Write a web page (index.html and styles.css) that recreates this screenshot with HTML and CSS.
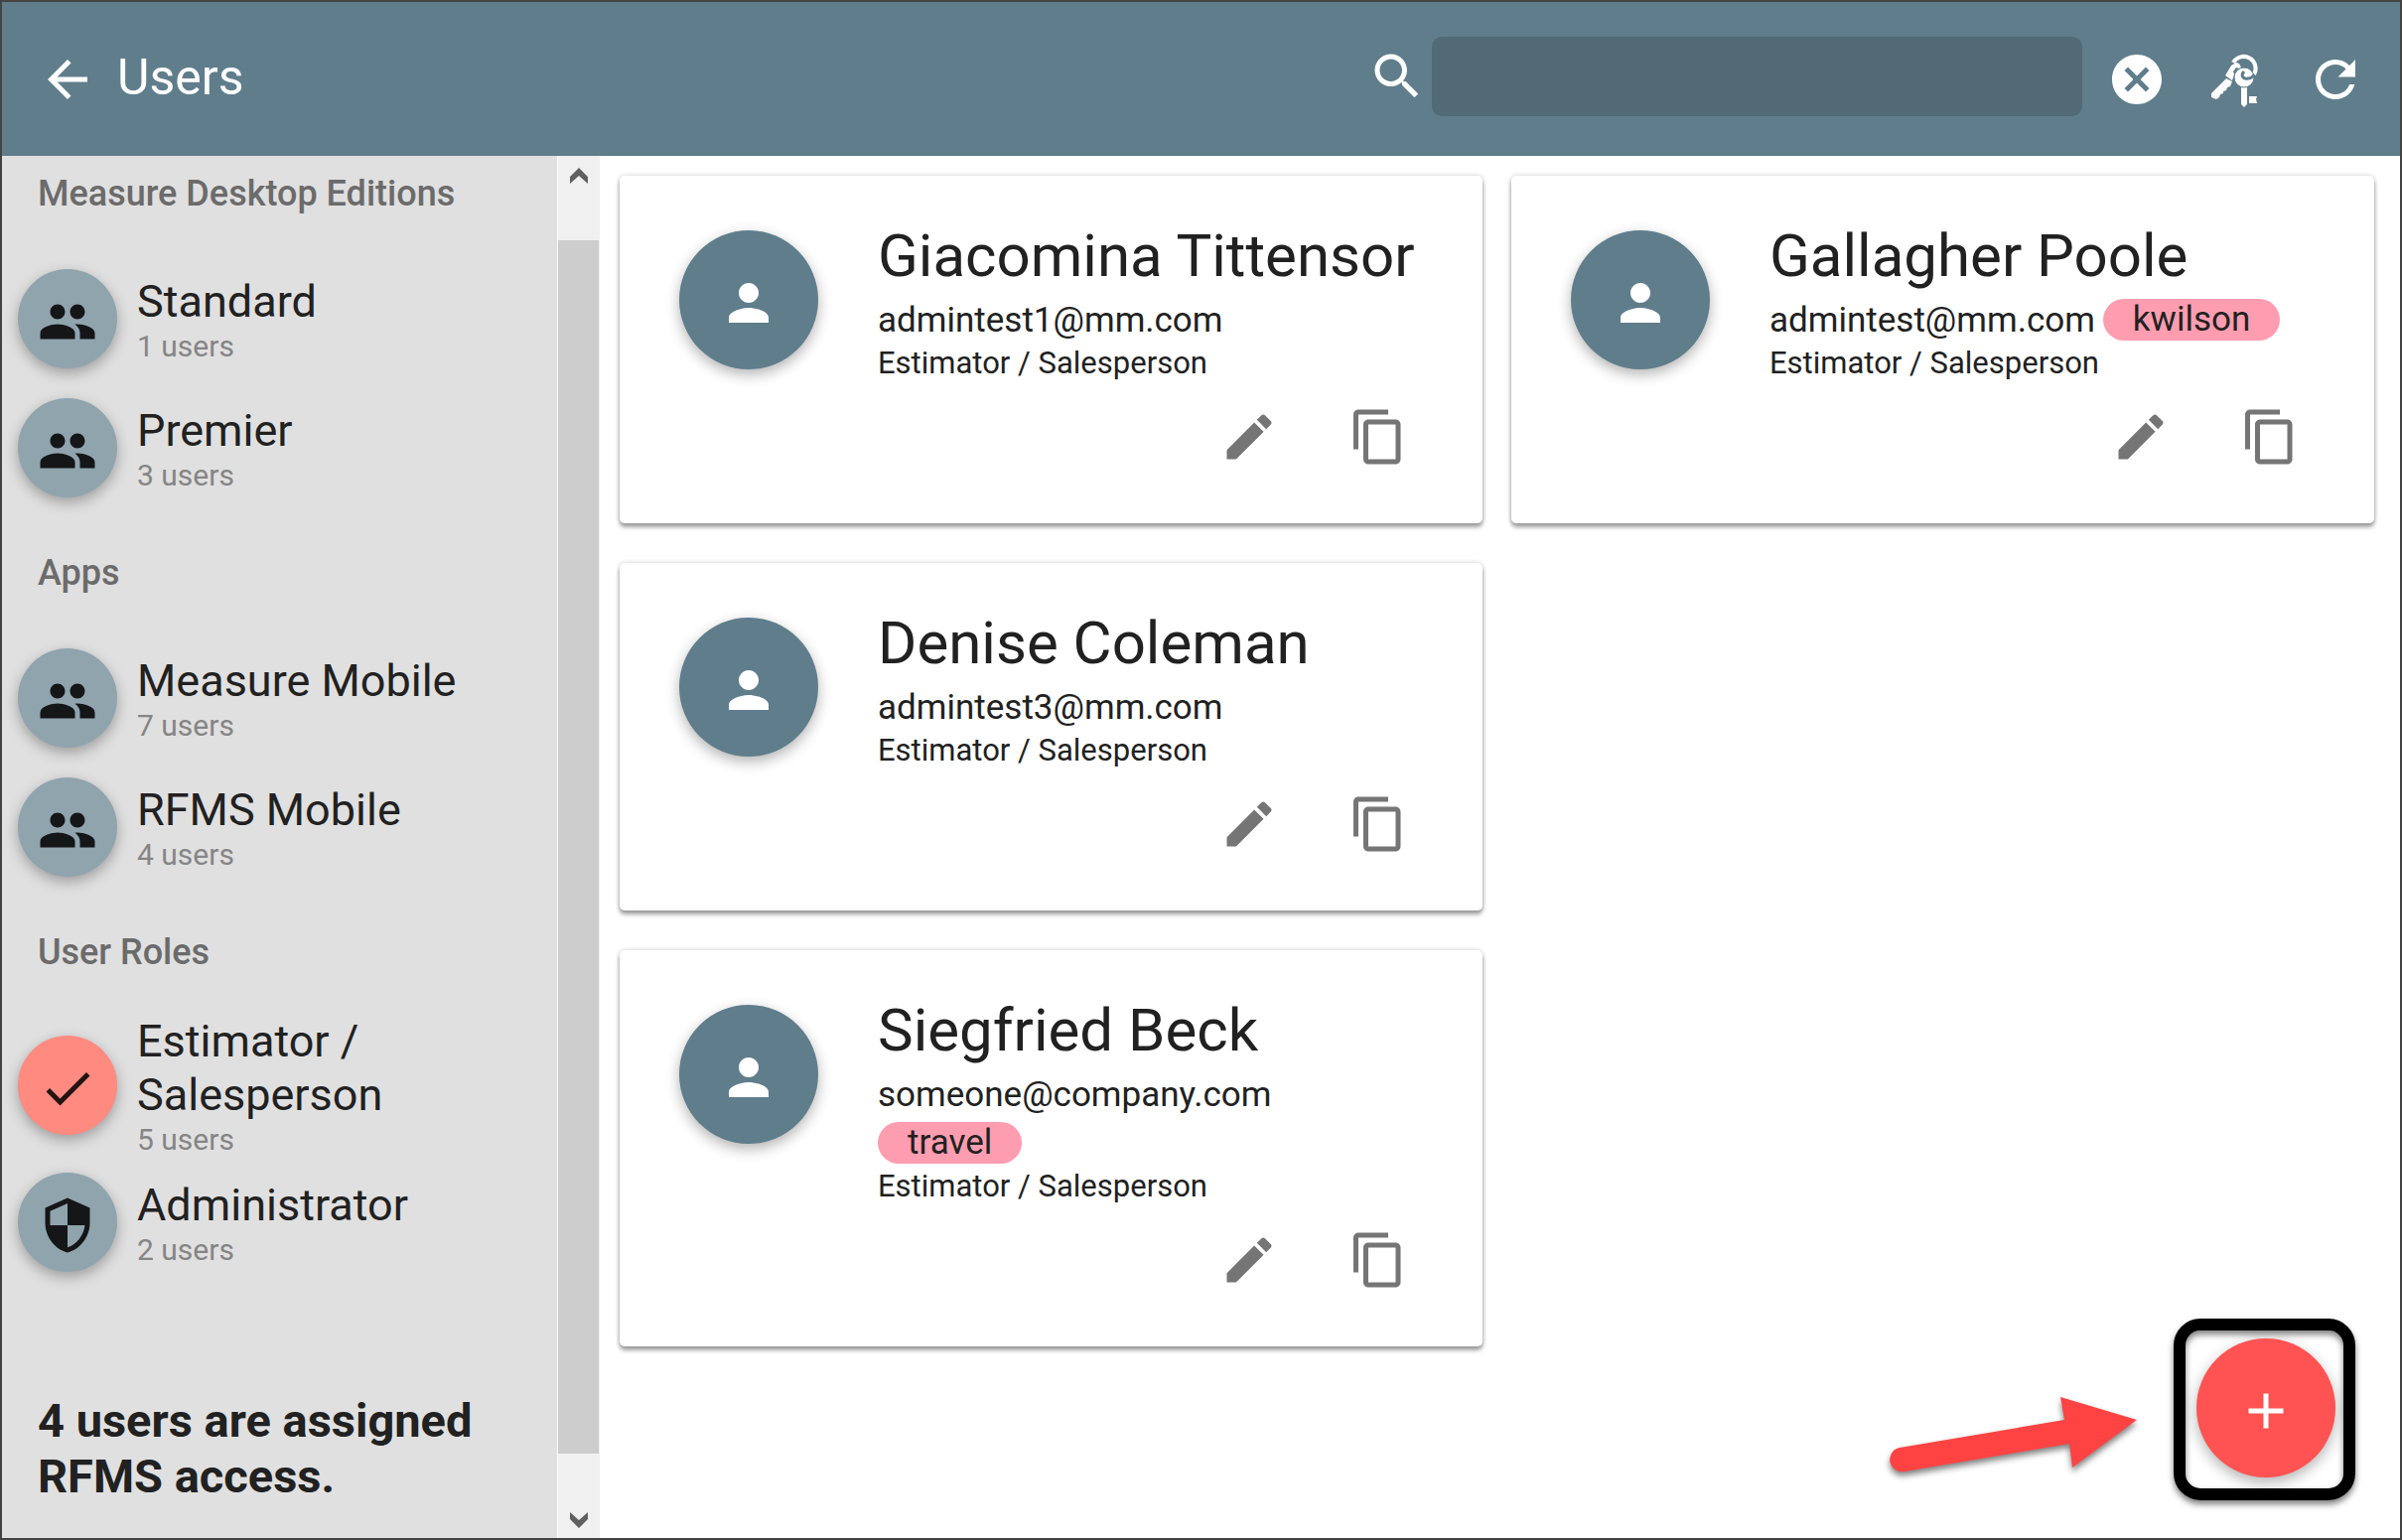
FILE: index.html
```html
<!DOCTYPE html>
<html lang="en">
<head>
<meta charset="UTF-8">
<meta name="viewport" content="width=device-width, initial-scale=1.0">
<title>Users</title>
<link rel="stylesheet" href="styles.css">
</head>
<body>
    <!-- shared icons -->
    <svg class="icon-defs" aria-hidden="true">
        <symbol id="i-group" viewBox="0 0 24 24"><path d="M16 11c1.66 0 2.99-1.34 2.99-3S17.66 5 16 5s-3 1.34-3 3 1.34 3 3 3zm-8 0c1.66 0 2.99-1.34 2.99-3S9.66 5 8 5 5 6.34 5 8s1.34 3 3 3zm0 2c-2.33 0-7 1.17-7 3.5V19h14v-2.500C15 14.170 10.330 13 8 13zm8 0c-.29 0-.62.02-.97.05 1.16.84 1.970 1.970 1.970 3.450V19h6v-2.500c0-2.330-4.670-3.500-7-3.500z"/></symbol>
        <symbol id="i-person" viewBox="0 0 24 24"><path d="M12 12c2.210 0 4-1.790 4-4s-1.790-4-4-4-4 1.790-4 4 1.790 4 4 4zm0 2c-2.670 0-8 1.340-8 4v2h16v-2c0-2.660-5.330-4-8-4z"/></symbol>
        <symbol id="i-check" viewBox="0 0 24 24"><path d="M9 16.170L4.830 12l-1.420 1.410L9 19 21 7l-1.410-1.410z"/></symbol>
        <symbol id="i-shield" viewBox="0 0 24 24"><path d="M12 1L3 5v6c0 5.550 3.840 10.740 9 12 5.160-1.260 9-6.450 9-12V5l-9-4zm0 10.990h7c-.53 4.120-3.280 7.790-7 8.940V12H5V6.300l7-3.110v8.800z"/></symbol>
        <symbol id="i-edit" viewBox="0 0 24 24"><path d="M3 17.250V21h3.750L17.810 9.940l-3.750-3.750L3 17.250zM20.710 7.040c.39-.39.39-1.020 0-1.410l-2.340-2.340c-.39-.39-1.020-.39-1.410 0l-1.830 1.830 3.750 3.750 1.830-1.830z"/></symbol>
        <symbol id="i-copy" viewBox="0 0 24 24"><path d="M16 1H4c-1.100 0-2 .9-2 2v14h2V3h12V1zm3 4H8c-1.100 0-2 .9-2 2v14c0 1.100.9 2 2 2h11c1.100 0 2-.9 2-2V7c0-1.100-.9-2-2-2zm0 16H8V7h11v14z"/></symbol>
    </svg>

    <div class="wrapper">
        <header class="toolbar">
            <button class="icon-btn" aria-label="Back">
                <svg class="icon" viewBox="0 0 24 24"><path d="M20 11H7.830l5.590-5.590L12 4l-8 8 8 8 1.410-1.410L7.830 13H20v-2z"/></svg>
            </button>
            <h1 class="toolbar-title">Users</h1>
            <form class="search-area">
                <label for="search">
                    <svg class="icon" viewBox="0 0 24 24" role="img" aria-label="Search"><path d="M15.500 14h-.79l-.28-.27C15.410 12.590 16 11.110 16 9.500 16 5.910 13.090 3 9.500 3S3 5.910 3 9.500 5.910 16 9.500 16c1.610 0 3.090-.59 4.230-1.570l.27.28v.79l5 4.990L20.490 19l-4.990-5zm-6 0C7.010 14 5 11.990 5 9.500S7.010 5 9.500 5 14 7.010 14 9.500 11.990 14 9.500 14z"/></svg>
                </label>
                <input type="text" id="search">
            </form>
            <div class="toolbar-actions">
                <button class="icon-btn" aria-label="Clear">
                    <svg class="icon" viewBox="0 0 24 24"><path d="M12 2C6.470 2 2 6.470 2 12s4.470 10 10 10 10-4.470 10-10S17.530 2 12 2zm5 13.590L15.590 17 12 13.410 8.410 17 7 15.590 10.590 12 7 8.410 8.410 7 12 10.590 15.590 7 17 8.410 13.410 12 17 15.590z"/></svg>
                </button>
                <button class="icon-btn" aria-label="Licenses">
                    <svg class="icon" viewBox="0 0 60 60">
                        <path class="key-ring" d="M27 13A12 12 0 1 1 48 25"/>
                        <path d="M25 16l5-3 3 1 2 4-2 1-3-1-3 4 1 3-2 6-7-5z"/>
                        <path d="M20 29l6 3-2 5-3 1-1 3-3 1v2l-3 1-1 3-3 2-5-2v-4z"/>
                        <path d="M35 35h6v20l-3 3-3-3z"/>
                        <path d="M43 47h8l-1 3 1 4h-8z"/>
                        <circle cx="38" cy="28" r="10" class="key-bow"/>
                        <path class="key-hole" d="M38 22c-4 4-1 8 4 7 3 0 5-2 6-4"/>
                    </svg>
                </button>
                <button class="icon-btn" aria-label="Refresh">
                    <svg class="icon" viewBox="0 0 24 24"><path d="M17.650 6.350C16.200 4.900 14.210 4 12 4c-4.420 0-7.990 3.580-7.990 8s3.570 8 7.990 8c3.730 0 6.840-2.550 7.730-6h-2.080c-.82 2.330-3.040 4-5.650 4-3.310 0-6-2.690-6-6s2.690-6 6-6c1.660 0 3.140.69 4.220 1.780L13 11h7V4l-2.350 2.350z"/></svg>
                </button>
            </div>
        </header>

        <div class="content">
            <aside class="sidebar">
                <h2>Measure Desktop Editions</h2>
                <button class="filter">
                    <span class="circle"><svg class="icon"><use href="#i-group"/></svg></span>
                    <span class="filter-text"><span class="filter-name">Standard</span><span class="filter-count">1 users</span></span>
                </button>
                <button class="filter">
                    <span class="circle"><svg class="icon"><use href="#i-group"/></svg></span>
                    <span class="filter-text"><span class="filter-name">Premier</span><span class="filter-count">3 users</span></span>
                </button>

                <h2>Apps</h2>
                <button class="filter">
                    <span class="circle"><svg class="icon"><use href="#i-group"/></svg></span>
                    <span class="filter-text"><span class="filter-name">Measure Mobile</span><span class="filter-count">7 users</span></span>
                </button>
                <button class="filter">
                    <span class="circle"><svg class="icon"><use href="#i-group"/></svg></span>
                    <span class="filter-text"><span class="filter-name">RFMS Mobile</span><span class="filter-count">4 users</span></span>
                </button>

                <h2>User Roles</h2>
                <button class="filter" aria-pressed="true">
                    <span class="circle selected"><svg class="icon"><use href="#i-check"/></svg></span>
                    <span class="filter-text"><span class="filter-name">Estimator / Salesperson</span><span class="filter-count">5 users</span></span>
                </button>
                <button class="filter">
                    <span class="circle"><svg class="icon"><use href="#i-shield"/></svg></span>
                    <span class="filter-text"><span class="filter-name">Administrator</span><span class="filter-count">2 users</span></span>
                </button>

                <p class="summary">4 users are assigned RFMS access.</p>
            </aside>

            <div class="scrollbar">
                <svg class="scroll-arrow" viewBox="0 0 18 16"><path d="M0 9L9 0l9 9v7L9 8l-9 8z"/></svg>
                <div class="scroll-thumb"></div>
                <svg class="scroll-arrow" viewBox="0 0 18 16"><path d="M0 7l9 9 9-9V0L9 8 0 0z"/></svg>
            </div>

            <main class="cards">
                <article class="card">
                    <span class="circle avatar"><svg class="icon"><use href="#i-person"/></svg></span>
                    <div class="card-body">
                        <h3>Giacomina Tittensor</h3>
                        <p class="email"><span>admintest1@mm.com</span></p>
                        <p class="role">Estimator / Salesperson</p>
                        <div class="card-actions">
                            <button class="icon-btn" aria-label="Edit"><svg class="icon"><use href="#i-edit"/></svg></button>
                            <button class="icon-btn" aria-label="Copy"><svg class="icon"><use href="#i-copy"/></svg></button>
                        </div>
                    </div>
                </article>
                <article class="card">
                    <span class="circle avatar"><svg class="icon"><use href="#i-person"/></svg></span>
                    <div class="card-body">
                        <h3>Gallagher Poole</h3>
                        <p class="email"><span>admintest@mm.com</span><span class="tag">kwilson</span></p>
                        <p class="role">Estimator / Salesperson</p>
                        <div class="card-actions">
                            <button class="icon-btn" aria-label="Edit"><svg class="icon"><use href="#i-edit"/></svg></button>
                            <button class="icon-btn" aria-label="Copy"><svg class="icon"><use href="#i-copy"/></svg></button>
                        </div>
                    </div>
                </article>
                <article class="card first-col">
                    <span class="circle avatar"><svg class="icon"><use href="#i-person"/></svg></span>
                    <div class="card-body">
                        <h3>Denise Coleman</h3>
                        <p class="email"><span>admintest3@mm.com</span></p>
                        <p class="role">Estimator / Salesperson</p>
                        <div class="card-actions">
                            <button class="icon-btn" aria-label="Edit"><svg class="icon"><use href="#i-edit"/></svg></button>
                            <button class="icon-btn" aria-label="Copy"><svg class="icon"><use href="#i-copy"/></svg></button>
                        </div>
                    </div>
                </article>
                <article class="card first-col">
                    <span class="circle avatar"><svg class="icon"><use href="#i-person"/></svg></span>
                    <div class="card-body">
                        <h3>Siegfried Beck</h3>
                        <p class="email"><span>someone@company.com</span><span class="tag">travel</span></p>
                        <p class="role">Estimator / Salesperson</p>
                        <div class="card-actions">
                            <button class="icon-btn" aria-label="Edit"><svg class="icon"><use href="#i-edit"/></svg></button>
                            <button class="icon-btn" aria-label="Copy"><svg class="icon"><use href="#i-copy"/></svg></button>
                        </div>
                    </div>
                </article>
            </main>
        </div>

        <!-- add button with the callout around it -->
        <div class="add-area">
            <svg class="pointer" viewBox="0 0 270 100"><path d="M18 63L184 35l-4-23 77 23-65 48-3-24L23 87a12 12 0 0 1-5-24z"/></svg>
            <div class="callout">
                <button class="add-btn" aria-label="Add user">
                    <svg class="icon" viewBox="0 0 24 24"><path d="M19 13h-6v6h-2v-6H5v-2h6V5h2v6h6v2z"/></svg>
                </button>
            </div>
        </div>
    </div>
</body>
</html>
```
FILE: styles.css
```css
*{
    box-sizing: border-box;
}
body{
    margin: 0;
    font-family: Roboto, "Liberation Sans", sans-serif;
    color: #212121;
    background: #fff;
}
h1, h2, h3, p{
    margin: 0;
    font-weight: 400;
}
button{
    padding: 0;
    border: 0;
    background: none;
    color: inherit;
    font: inherit;
    text-align: left;
    cursor: pointer;
}
.icon-defs{
    display: none;
}
.icon{
    display: block;
    flex: none;
    width: 60px;
    height: 60px;
    fill: currentColor;
}
.wrapper{
    position: relative;
    display: flex;
    flex-direction: column;
    min-height: 100vh;
    border: 2px solid #434343;
}

/* toolbar */
.toolbar{
    display: flex;
    align-items: center;
    height: 155px;
    padding: 0 35px 0 36px;
    background: #607d8b;
    color: #fff;
}
.toolbar-title{
    flex: 1;
    margin: 0 0 4px 20px;
    font-size: 50px;
    line-height: 60px;
}
.search-area{
    display: flex;
    align-items: center;
    gap: 5px;
    width: 720px;
    margin: 0 25px 5px 0;
}
.search-area input{
    flex: 1;
    min-width: 0;
    height: 80px;
    padding: 0 20px;
    border: 0;
    border-radius: 10px;
    background: #526a76;
    color: #fff;
    font: inherit;
    font-size: 36px;
}
.toolbar-actions{
    display: flex;
    gap: 40px;
}
.key-bow{
    stroke: #607d8b;
    stroke-width: 1;
}
.key-ring{
    fill: none;
    stroke: #fff;
    stroke-width: 4;
}
.key-hole{
    fill: none;
    stroke: #607d8b;
    stroke-width: 3;
}

.content{
    flex: 1;
    display: flex;
}

/* sidebar */
.sidebar{
    flex: none;
    width: 559px;
    padding-top: 17px;
    background: #e0e0e0;
}
.sidebar h2{
    padding: 40px 36px;
    font-size: 36px;
    font-weight: 500;
    line-height: 42px;
    color: #6b6b6b;
}
.sidebar h2:first-child{
    padding-top: 0;
}
.filter{
    display: flex;
    align-items: center;
    gap: 20px;
    width: 100%;
    min-height: 130px;
    padding: 0 90px 0 16px;
}
.circle{
    flex: none;
    display: flex;
    align-items: center;
    justify-content: center;
    width: 100px;
    height: 100px;
    padding-top: 6px;
    border-radius: 50%;
    background: #90a4ae;
    color: #141618;
    box-shadow: 0 5px 14px rgba(0,0,0,.3);
}
.circle.selected{
    background: #ff8a80;
    color: #231312;
}
.filter-name, .filter-count{
    display: block;
}
.filter-text{
    padding-top: 2px;
}
.filter-name{
    font-size: 45px;
    line-height: 54px;
}
.filter-count{
    font-size: 30px;
    line-height: 36px;
    color: #858585;
}
.summary{
    padding: 107px 60px 0 36px;
    font-size: 47px;
    font-weight: 700;
    line-height: 56px;
}

.scrollbar{
    flex: none;
    display: flex;
    flex-direction: column;
    align-items: center;
    justify-content: space-between;
    width: 43px;
    padding: 12px 1px 10px 0;
    border-left: 1px solid #fff;
    background: #f0f0f0;
}
.scroll-arrow{
    width: 18px;
    height: 16px;
    fill: #606060;
}
.scroll-thumb{
    flex: 1;
    width: 41px;
    margin: 57px 0 59px;
    background: #cdcdcd;
}

/* user cards */
.cards{
    flex: 1;
    display: grid;
    grid-template-columns: repeat(2, minmax(0, 1fr));
    gap: 40px 29px;
    align-content: start;
    padding: 20px 26px 20px 20px;
}
.card{
    display: flex;
    align-items: flex-start;
    gap: 60px;
    padding: 0 60px 57px;
    border-radius: 5px;
    background: #fff;
    box-shadow: 0 4px 4px rgba(0,0,0,.35), 0 0 5px rgba(0,0,0,.2);
}
.first-col{
    grid-column: 1;
}
.avatar{
    width: 140px;
    height: 140px;
    margin-top: 55px;
    background: #607d8b;
    color: #fff;
}
.card-body{
    flex: 1;
    min-width: 0;
    padding-top: 44px;
}
.card h3{
    font-size: 60px;
    line-height: 74px;
    white-space: nowrap;
}
.email{
    display: flex;
    flex-wrap: wrap;
    align-items: center;
    column-gap: 8px;
    margin-top: 3px;
    font-size: 35px;
    line-height: 49px;
}
/* 42px pill, lines stay 49px apart */
.tag{
    margin: 3px 0 4px;
    padding: 0 30px;
    border-radius: 21px;
    background: #ff9db0;
    line-height: 42px;
}
.role{
    font-size: 31px;
    line-height: 38px;
}
.card-actions{
    display: flex;
    justify-content: flex-end;
    gap: 70px;
    margin-top: 25px;
    padding-right: 15px;
    color: #757575;
}

/* floating add button */
.add-area{
    position: absolute;
    right: 45px;
    bottom: 38px;
    display: flex;
    align-items: center;
    gap: 24px;
}
.pointer{
    width: 270px;
    height: 100px;
    margin-top: 50px;
    fill: #ff4343;
    filter: drop-shadow(0 4px 3px rgba(0,0,0,.5));
}
.callout{
    padding: 8px 8px 11px 11px;
    border: 12px solid #000;
    border-radius: 27px;
    box-shadow: 0 4px 6px rgba(0,0,0,.5), inset 0 4px 6px rgba(0,0,0,.5);
}
.add-btn{
    display: flex;
    align-items: center;
    justify-content: center;
    width: 140px;
    height: 140px;
    padding-top: 6px;
    border-radius: 50%;
    background: #ff5252;
    color: #fff;
    box-shadow: 0 5px 14px rgba(0,0,0,.3);
}
```
